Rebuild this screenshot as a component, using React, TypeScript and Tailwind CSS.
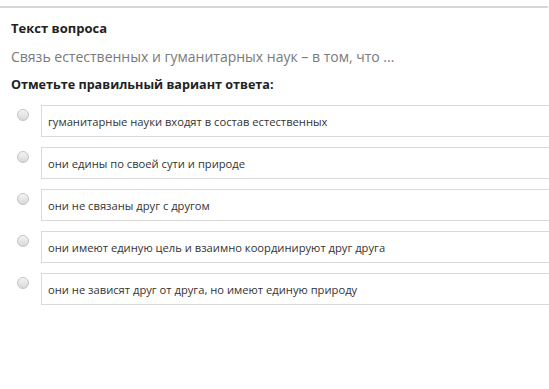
import React from 'react';

const options = [
  'гуманитарные науки входят в состав естественных',
  'они едины по своей сути и природе',
  'они не связаны друг с другом',
  'они имеют единую цель и взаимно координируют друг друга',
  'они не зависят друг от друга, но имеют единую природу',
];

const Radio: React.FC = () => (
  <span className="mt-[4px] ml-[17px] block h-[12px] w-[12px] shrink-0 rounded-full border border-[#c4c4c4] bg-gradient-to-b from-[#f4f4f4] to-[#d8d8d8]" />
);

export default function App() {
  return (
    <div className="h-[389px] w-[549px] bg-white font-['Open_Sans',sans-serif]">
      <div className="pt-[6px]">
        <div className="h-[2px] w-[548px] bg-[#d6d6d6]" />
      </div>

      <div className="px-[11px] pt-[11px]">
        <h3 className="text-[13px] font-bold leading-[18px] text-[#222]">Текст вопроса</h3>
        <p className="mt-[10px] text-[14px] leading-[20px] text-[#7a7a7a]">
          Связь естественных и гуманитарных наук – в том, что ...
        </p>
        <p className="mt-[9px] text-[12.6px] font-bold leading-[18px] text-[#222]">Отметьте правильный вариант ответа:</p>
      </div>

      <div className="mt-[11px] flex flex-col gap-[10px]">
        {options.map((text) => (
          <label key={text} className="flex items-start">
            <Radio />
            <div className="ml-[12px] flex h-[32px] flex-1 items-center border border-r-0 border-[#d9d9d9] pl-[6px] pt-[2px] text-[11.2px] text-[#333]">
              {text}
            </div>
          </label>
        ))}
      </div>
    </div>
  );
}
